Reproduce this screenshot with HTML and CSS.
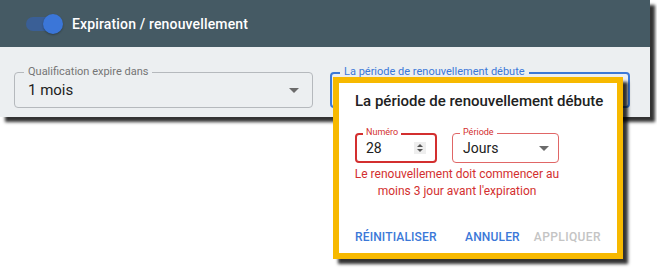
FILE: index.html
```html
<!DOCTYPE html>
<html lang="fr">

<head>
    <meta charset="UTF-8">
    <meta name="viewport" content="width=device-width, initial-scale=1.0">
    <title>Expiration / renouvellement</title>
    <link rel="stylesheet" href="styles.css">
</head>

<body>
    <div class="panel">
        <div class="panel-header">
            <div class="toggle">
                <span class="toggle-track"></span>
                <span class="toggle-knob"></span>
            </div>
            <h2>Expiration / renouvellement</h2>
        </div>
        <div class="panel-body">
            <div class="outlined-field">
                <label>Qualification expire dans</label>
                <div class="field-value">1 mois</div>
                <span class="select-arrow"></span>
            </div>
            <div class="outlined-field focused">
                <label>La période de renouvellement débute</label>
                <div class="field-value"></div>
            </div>
        </div>

        <div class="popup">
            <h3>La période de renouvellement débute</h3>
            <div class="popup-form">
                <div class="popup-fields">
                    <div class="small-field number-field">
                        <label>Numéro</label>
                        <span class="small-value">28</span>
                        <span class="spinner">
                            <span class="spin-up"></span>
                            <span class="spin-down"></span>
                        </span>
                    </div>
                    <div class="small-field period-field">
                        <label>Période</label>
                        <span class="small-value">Jours</span>
                        <span class="select-arrow"></span>
                    </div>
                </div>
                <p class="error-text">Le renouvellement doit commencer au<br>moins 3 jour avant l'expiration</p>
            </div>
            <div class="popup-actions">
                <button class="btn">Réinitialiser</button>
                <button class="btn push-right">Annuler</button>
                <button class="btn disabled">Appliquer</button>
            </div>
        </div>
    </div>
</body>

</html>
```

FILE: styles.css
```css
html,
body {
    height: 100%;
}

body {
    margin: 0;
    min-height: 269px;
    background: #fff;
    font-family: Roboto, "Liberation Sans", sans-serif;
}

.panel {
    width: 650px;
    background-color: #eceff1;
    box-shadow: 5px 5px 3px rgba(0, 0, 0, 0.8);
    position: relative;
}

.panel-header {
    height: 47px;
    background-color: #455a64;
    display: flex;
    align-items: center;
    padding-left: 26px;
}

.panel-header h2 {
    margin: 0 0 0 9px;
    font-size: 14px;
    font-weight: 500;
    color: #fff;
    letter-spacing: 0.15px;
}

.toggle {
    position: relative;
    width: 37px;
    height: 20px;
    display: flex;
    align-items: center;
}

.toggle-track {
    width: 32px;
    height: 14px;
    border-radius: 7px;
    background-color: #3a5f96;
}

.toggle-knob {
    position: absolute;
    right: 0;
    top: 0;
    width: 20px;
    height: 20px;
    border-radius: 50%;
    background-color: #3b76d8;
    box-shadow: 0 1px 2px rgba(0, 0, 0, 0.3);
}

.panel-body {
    display: grid;
    grid-template-columns: 299px 300px;
    column-gap: 17px;
    padding: 25px 0 9px 14px;
}

.outlined-field {
    position: relative;
    height: 36px;
    box-sizing: border-box;
    border: 1px solid #b5b9bd;
    border-radius: 4px;
    display: flex;
    align-items: center;
    padding-left: 13px;
}

.outlined-field label {
    position: absolute;
    left: 9px;
    top: -8px;
    padding: 0 4px;
    background-color: #eceff1;
    font-size: 11px;
    line-height: 14px;
    color: #757575;
}

.outlined-field.focused {
    border: 2px solid #3b78d8;
}

.outlined-field.focused label {
    color: #3b78d8;
    left: 8px;
    top: -9px;
}

.field-value {
    font-size: 15px;
    color: #212121;
    flex: 1;
}

.select-arrow {
    width: 0;
    height: 0;
    border-left: 5px solid transparent;
    border-right: 5px solid transparent;
    border-top: 5px solid #6b6b6b;
    margin-right: 13px;
}

/* popup over the second field */
.popup {
    position: absolute;
    z-index: 2;
    left: 333px;
    top: 77px;
    width: 290px;
    height: 182px;
    box-sizing: border-box;
    border: 6px solid #f7b900;
    background-color: #fff;
    box-shadow: 5px 5px 3px rgba(0, 0, 0, 0.8);
    padding: 9px 14px 8px 16px;
    display: flex;
    flex-direction: column;
}

.popup h3 {
    margin: 0;
    font-size: 15px;
    line-height: 18px;
    font-weight: 500;
    color: #212121;
    white-space: nowrap;
}

.popup-form {
    width: 204px;
    margin-top: 23px;
}

.popup-fields {
    display: flex;
    gap: 15px;
}

.small-field {
    position: relative;
    height: 30px;
    box-sizing: border-box;
    border-radius: 4px;
    display: flex;
    align-items: center;
}

.small-field label {
    position: absolute;
    top: -7px;
    left: 7px;
    padding: 0 3px;
    background-color: #fff;
    font-size: 9px;
    line-height: 11px;
    color: #d32f2f;
}

.number-field {
    width: 82px;
    border: 2px solid #d32f2f;
    padding-left: 9px;
}

.number-field label {
    left: 6px;
    top: -8px;
}

.period-field {
    width: 107px;
    border: 1px solid #e06666;
    padding-left: 10px;
}

.small-value {
    font-size: 14px;
    color: #212121;
    flex: 1;
}

.period-field .select-arrow {
    margin-right: 9px;
}

.spinner {
    width: 12px;
    height: 12px;
    margin-right: 9px;
    background-color: #eeeeee;
    display: flex;
    flex-direction: column;
    align-items: center;
    justify-content: center;
    gap: 2px;
}

.spin-up {
    border-left: 3px solid transparent;
    border-right: 3px solid transparent;
    border-bottom: 3px solid #555;
}

.spin-down {
    border-left: 3px solid transparent;
    border-right: 3px solid transparent;
    border-top: 3px solid #555;
}

.error-text {
    margin: 3px -12px 0;
    font-size: 12px;
    line-height: 17px;
    color: #d32f2f;
    text-align: center;
    white-space: nowrap;
}

.popup-actions {
    margin-top: auto;
    margin-right: 2px;
    display: flex;
    align-items: center;
}

.btn {
    background: none;
    border: none;
    padding: 0;
    font-family: inherit;
    font-size: 12px;
    font-weight: 500;
    letter-spacing: 0.15px;
    text-transform: uppercase;
    color: #3b78d8;
    line-height: 16px;
}

.btn.push-right {
    margin-left: auto;
    margin-right: 14px;
}

.btn.disabled {
    color: #c4c4c4;
    letter-spacing: 0.4px;
}
```
